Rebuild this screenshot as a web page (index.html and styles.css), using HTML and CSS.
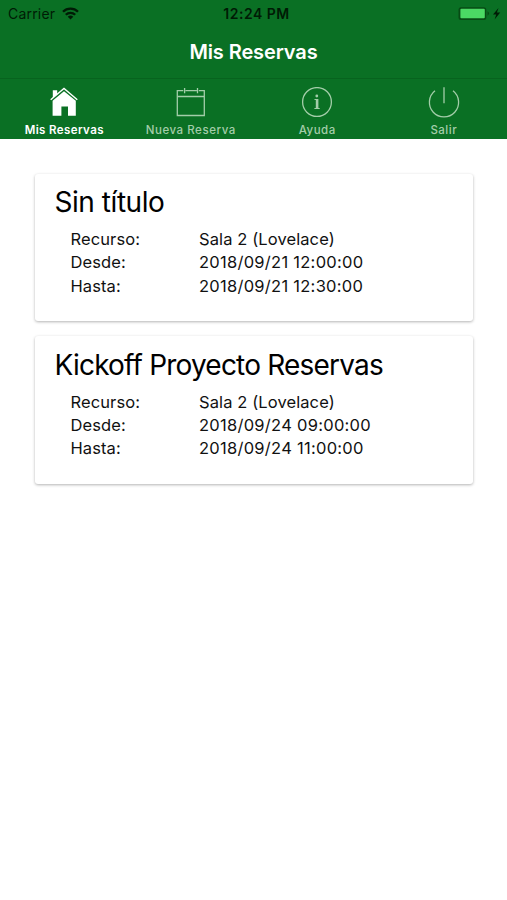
FILE: index.html
```html
<!DOCTYPE html>
<html lang="es">
<head>
<meta charset="utf-8">
<title>Mis Reservas</title>
<link rel="stylesheet" href="styles.css">
</head>
<body>
<header class="header">
  <div class="status">
    <div class="carrier"><span>Carrier</span>
      <svg width="17" height="13" viewBox="0 0 17 13"><g fill="none" stroke="#001b05" stroke-width="2.3"><path d="M1 4.7a10.6 10.6 0 0 1 15 0"/><path d="M3.8 7.8a6.7 6.7 0 0 1 9.4 0"/></g><path d="M5.7 9.7a4.2 4.2 0 0 1 5.6 0l-2.8 2.9z" fill="#001b05"/></svg>
    </div>
    <div class="time">12:24 PM</div>
    <div class="power">
      <svg width="44" height="14" viewBox="0 0 44 14"><rect x=".5" y=".3" width="27.8" height="12.6" rx="2.5" fill="#074b14"/><rect x="2.4" y="1.8" width="24.4" height="9.4" rx="1" fill="#4bd964"/><path d="M29.5 4.3q3.2 2.2 0 4.4z" fill="#074b14"/><path d="M40.5.9 35 7.4h3.2l-1.6 5.1 5.6-6.9h-3.3z" fill="#001b05"/></svg>
    </div>
  </div>
  <h1 class="title">Mis Reservas</h1>
  <nav class="tabs">
    <a class="tab active"><svg width="32" height="32" viewBox="0 0 32 32"><path d="M4.8 3.2h4.4v4L4.8 11z" fill="currentColor"/><path d="M2.7 12.7 16 1.5l13.3 11.2" fill="none" stroke="currentColor" stroke-width="1.4"/><path d="M4.6 13.7 16 4.3l11.8 9.4v15.1H20v-9.3h-6.6v9.3H4.6z" fill="currentColor"/></svg><span>Mis Reservas</span></a>
    <a class="tab"><svg width="32" height="32" viewBox="0 0 32 32" fill="none" stroke="currentColor" stroke-width="1.3"><path d="M8.3 3.7H2.3v24.8h27V3.7h-5.5M10.5 3.7h11.3M2.3 9.5h27M9.6 1v5.2M22.5 1v5.2"/></svg><span class="wide">Nueva Reserva</span></a>
    <a class="tab"><svg width="32" height="32" viewBox="0 0 32 32"><circle cx="16" cy="15" r="14.4" fill="none" stroke="currentColor" stroke-width="1.3"/><circle cx="15.8" cy="9" r="1.4" fill="currentColor"/><path d="M13.5 12h3.9v9h1.3v1h-5.3v-1h1.4v-8h-1.3z" fill="currentColor"/></svg><span>Ayuda</span></a>
    <a class="tab"><svg width="32" height="32" viewBox="0 0 32 32" fill="none" stroke="currentColor" stroke-width="1.3"><path d="M7 3.8A14.6 14.6 0 1 0 25 3.8M16 .3v16"/></svg><span>Salir</span></a>
  </nav>
</header>
<main class="list">
  <section class="card">
    <h2 class="name short">Sin título</h2>
    <dl class="details">
      <dt>Recurso:</dt><dd>Sala 2 (Lovelace)</dd>
      <dt>Desde:</dt><dd class="date">2018/09/21 12:00:00</dd>
      <dt>Hasta:</dt><dd class="date">2018/09/21 12:30:00</dd>
    </dl>
  </section>
  <section class="card">
    <h2 class="name">Kickoff Proyecto Reservas</h2>
    <dl class="details">
      <dt>Recurso:</dt><dd>Sala 2 (Lovelace)</dd>
      <dt>Desde:</dt><dd class="date">2018/09/24 09:00:00</dd>
      <dt>Hasta:</dt><dd class="date">2018/09/24 11:00:00</dd>
    </dl>
  </section>
</main>
</body>
</html>
```
FILE: styles.css
```css
* { box-sizing: border-box; }
body { margin: 0; min-height: 900px; background: #fff; color: #111; font-family: Inter, "Liberation Sans", sans-serif; }
svg { display: block; flex: none; }
.header { height: 139px; background: #0a7024; display: flex; flex-direction: column; }
.status { height: 27px; flex: none; display: grid; grid-template-columns: 1fr auto 1fr; align-items: center; padding: 0 5px 0 8px; color: #001b05; line-height: 20px; }
.carrier { display: flex; align-items: center; gap: 7px; font-size: 14px; letter-spacing: .2px; }
.time { font-size: 14px; font-weight: 600; letter-spacing: .5px; padding-left: 3px; }
.power { display: flex; justify-content: flex-end; }
.title { margin: 0; height: 51px; flex: none; font-size: 20px; font-weight: 600; line-height: 50px; letter-spacing: -.1px; text-align: center; color: #fff; }
.tabs { flex: 1; display: grid; grid-template-columns: repeat(4, 1fr); border-top: 1px solid #07631e; padding: 8px 0 0 1px; }
.tab { display: flex; flex-direction: column; align-items: center; color: #a3cda9; font-size: 11.5px; font-weight: 500; line-height: 16px; letter-spacing: .5px; white-space: nowrap; }
.tab span { margin-top: 3px; }
.tab .wide { letter-spacing: .55px; }
.active { color: #fff; font-weight: 600; letter-spacing: .4px; }
.list { padding: 34.5px 34px 0 35px; display: flex; flex-direction: column; gap: 15px; }
.card { height: 147.5px; padding: 9.5px 20px; border-radius: 3px; background: #fff; box-shadow: 0 1px 3px rgba(0, 0, 0, .3); }
.name { margin: 0 0 0 -.5px; font-size: 28px; font-weight: 400; line-height: 38px; letter-spacing: -.8px; color: #000; white-space: nowrap; }
.short { letter-spacing: -.45px; }
.details { margin: 7.2px 0 0 15.5px; display: grid; grid-template-columns: 128.5px 1fr; grid-auto-rows: 23.3px; font-size: 16.5px; line-height: 23px; letter-spacing: .1px; }
.details dt, .details dd { margin: 0; white-space: nowrap; }
.details .date { letter-spacing: .27px; }
```
